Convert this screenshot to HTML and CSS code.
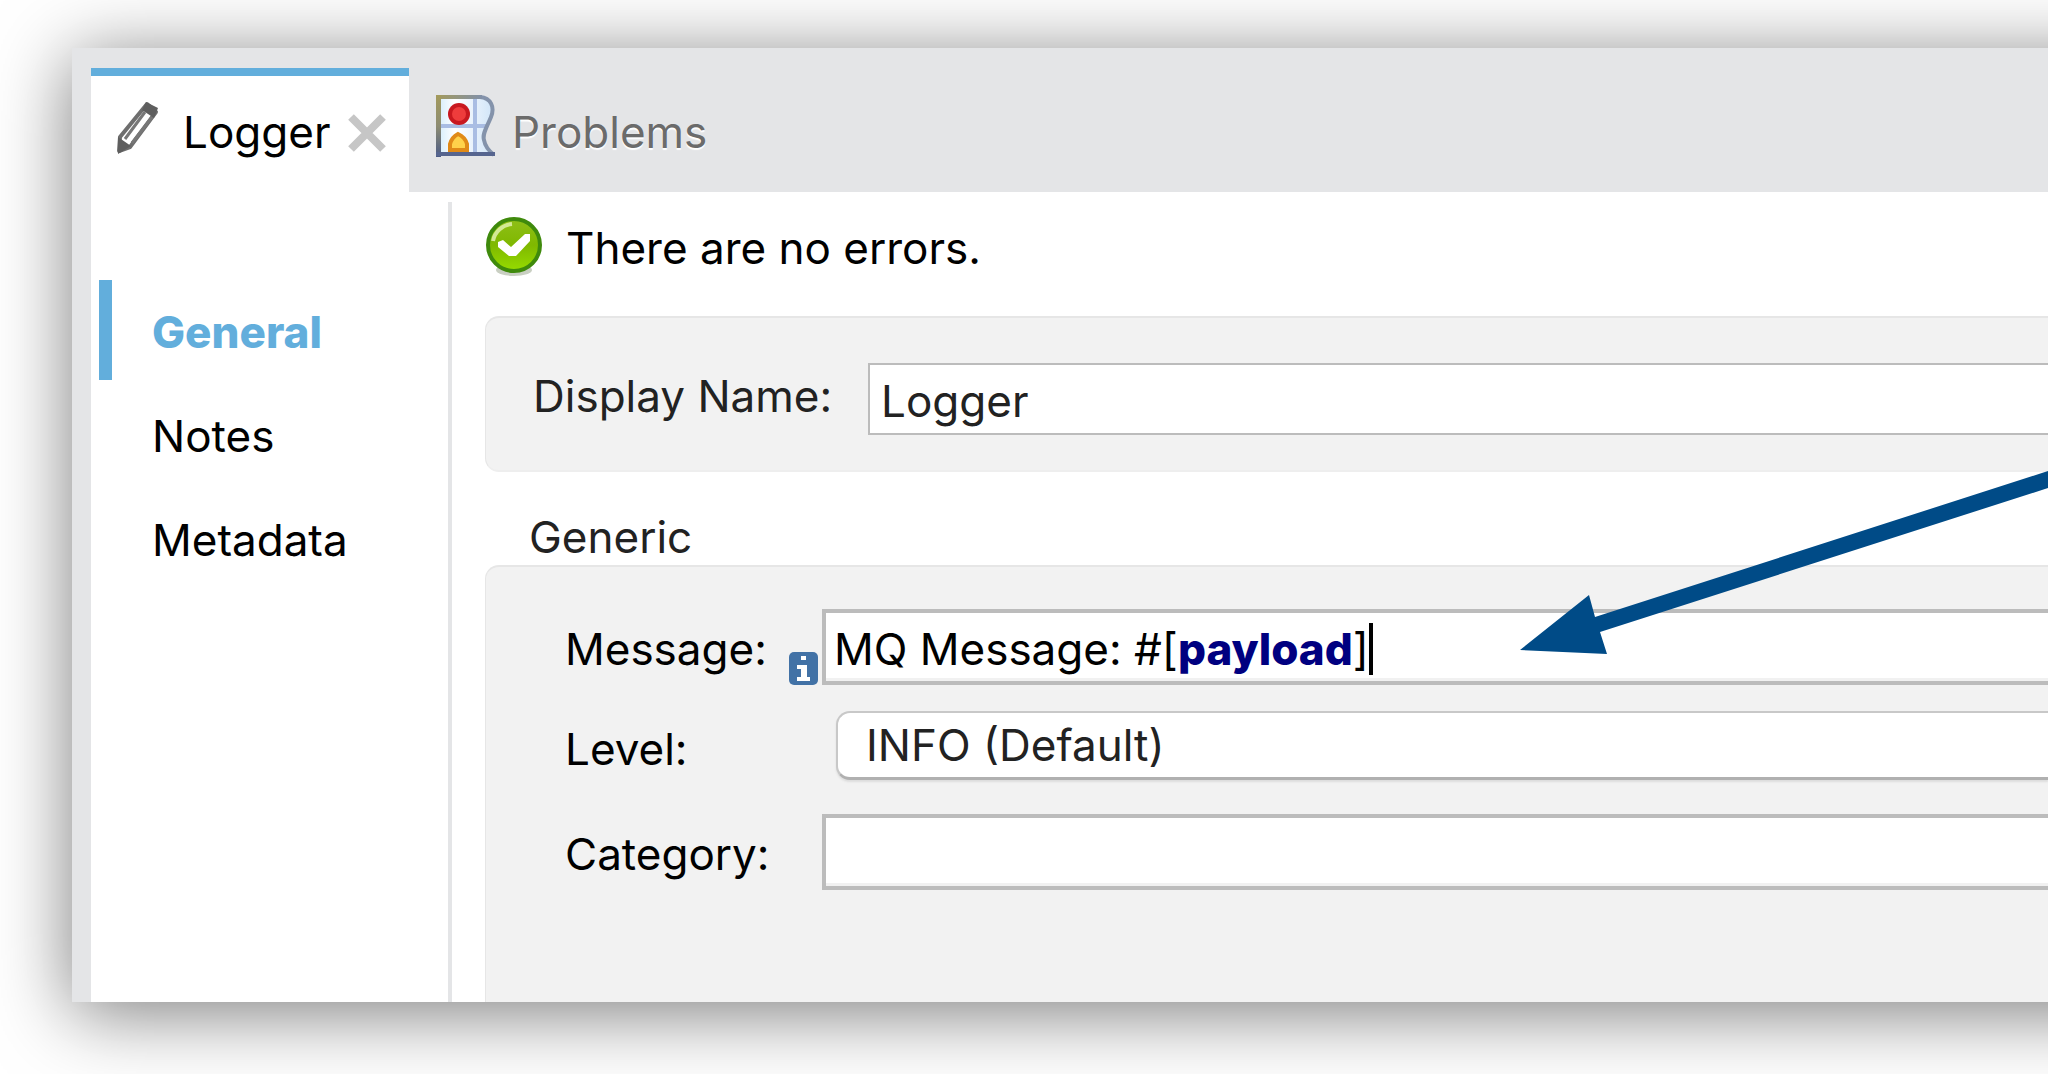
FILE: index.html
```html
<!DOCTYPE html>
<html lang="en">
<head>
<meta charset="utf-8">
<title>Logger</title>
<link rel="stylesheet" href="styles.css">
</head>
<body>
<div class="window">
  <div class="tabs" role="tablist">
    <div class="tab tab-active" role="tab" aria-selected="true">
      <svg class="pencil" viewBox="0 0 46 58" aria-hidden="true">
        <path d="M32 5 L5 38 L4 52 L15 48 L41 13 Z" fill="#fff" stroke="#6e6e6e" stroke-width="4" stroke-linejoin="round"/>
        <path d="M30 13 L10 40 M37 18 L17 44" stroke="#777" stroke-width="3"/>
        <path d="M31 3 L43 9 L39 19 L27 11 Z M3 38 L16 47 L3 55 Z" fill="#5e5e5e"/>
      </svg>
      <span class="tab-name">Logger</span>
      <button class="close" type="button" aria-label="Close">
        <svg class="close-icon" viewBox="0 0 40 40" aria-hidden="true"><path d="M4 4 L36 36 M36 4 L4 36" stroke="#c6c6c6" stroke-width="8"/></svg>
      </button>
    </div>
    <div class="tab tab-idle" role="tab" aria-selected="false">
      <svg class="problems-icon" viewBox="0 0 60 62" aria-hidden="true">
        <defs>
          <linearGradient id="edge" x1="0" y1="0" x2="0" y2="1"><stop offset="0" stop-color="#a39a5c"/><stop offset=".5" stop-color="#8d8c72"/><stop offset="1" stop-color="#4b5b86"/></linearGradient>
          <linearGradient id="top" gradientUnits="userSpaceOnUse" x1="0" y1="2" x2="46" y2="2"><stop offset="0" stop-color="#a39a5c"/><stop offset="1" stop-color="#8190a8"/></linearGradient>
          <linearGradient id="sheet" x1="0" y1="0" x2="1" y2="0"><stop offset="0" stop-color="#d5edfb"/><stop offset=".3" stop-color="#fff"/><stop offset="1" stop-color="#cfe4f8"/></linearGradient>
        </defs>
        <path d="M2 2 H44 C55 3 59 12 55 22 C51 32 46 39 48 45 C49 51 53 56 58 60 H2 Z" fill="url(#sheet)"/>
        <path d="M5 31 H51 M39 4 V58" stroke="#a9bde3" stroke-width="4"/>
        <path d="M44 2 C55 3 59 12 55 22 C51 32 46 39 48 45 C49 51 53 56 58 60" fill="none" stroke="#8493ab" stroke-width="4"/>
        <path d="M0 2 H46" stroke="url(#top)" stroke-width="4"/>
        <rect x="0" y="0" width="5" height="62" fill="url(#edge)"/>
        <path d="M0 59 H59" stroke="#56658f" stroke-width="4"/>
        <circle cx="23" cy="19" r="11" fill="#c8181f"/><circle cx="23" cy="19" r="7" fill="#ee3c3c"/>
        <path d="M14 55 V49 Q16 42 22 39 Q29 42 31 49 V55 Z" fill="#ffd24a" stroke="#e08a17" stroke-width="4"/>
      </svg>
      <span class="tab-name">Problems</span>
    </div>
  </div>
  <div class="content">
    <nav class="sidebar">
      <a class="nav-item nav-current" href="#general" aria-current="page">General</a>
      <a class="nav-item" href="#notes">Notes</a>
      <a class="nav-item" href="#metadata">Metadata</a>
    </nav>
    <main class="main">
      <div class="status">
        <svg class="status-icon" viewBox="0 0 58 60" aria-hidden="true">
          <defs><linearGradient id="ball" x1="0" y1="0" x2="0" y2="1"><stop offset="0" stop-color="#8fbf18"/><stop offset=".5" stop-color="#7fb800"/><stop offset="1" stop-color="#96dc00"/></linearGradient></defs>
          <ellipse cx="29" cy="54" rx="18" ry="6" fill="#c9cfc2"/>
          <circle cx="29" cy="29" r="26" fill="url(#ball)" stroke="#3f8a0c" stroke-width="4"/>
          <path d="M8 25 A21 21 0 0 1 27 8" fill="none" stroke="#d3e996" stroke-width="4"/>
          <path d="M13 26 L18 24 L26 31 L40 18 L45 18 L45 25 L31 40 L24 40 L13 31 Z" fill="#fff"/>
        </svg>
        <span class="status-text">There are no errors.</span>
      </div>
      <section class="panel name-panel">
        <label class="label" for="display-name">Display Name:</label>
        <input class="field name-field" id="display-name" type="text" value="Logger">
      </section>
      <h2 class="group-title">Generic</h2>
      <section class="panel form">
        <div class="row">
          <label class="label" id="message-label">Message:</label>
          <button class="info" type="button" aria-label="Message help">
            <svg class="info-icon" viewBox="0 0 29 33" aria-hidden="true"><rect width="29" height="33" rx="5" fill="#4272a6"/><path d="M12 4 H17 V8 H12 Z M8 13 H18 V25 H21 V29 H8 V25 H12 V17 H8 Z" fill="#fff"/></svg>
          </button>
          <div class="field message" role="textbox" contenteditable="true" aria-labelledby="message-label" spellcheck="false">MQ Message: #[<b class="keyword">payload</b>]<span class="caret"></span></div>
        </div>
        <div class="row level-row">
          <label class="label" for="level">Level:</label>
          <select class="select" id="level"><option>INFO (Default)</option></select>
        </div>
        <div class="row">
          <label class="label" for="category">Category:</label>
          <input class="field" id="category" type="text">
        </div>
      </section>
    </main>
  </div>
</div>
<svg class="arrow" viewBox="0 0 532 184" aria-hidden="true">
  <path d="M4 179 L73 124 L79 146 L532 0 V17 L84 161 L91 183 Z" fill="#004b87"/>
</svg>
</body>
</html>
```
FILE: styles.css
```css
* { box-sizing: border-box; }

body {
  margin: 0;
  min-height: 100vh;
  padding: 48px 0 72px 72px;
  display: flex;
  position: relative;
  overflow: hidden;
  background: #fff;
  color: #000;
  font: 44px/52px Inter, "Liberation Sans", sans-serif;
}

/* The window runs on past the right edge of the view */
.window {
  flex: 1;
  margin-right: -100px;
  padding: 20px 100px 0 19px;
  display: flex;
  flex-direction: column;
  background: #e4e5e7;
  box-shadow: 0 10px 72px rgba(0, 0, 0, .52);
}

.tabs { display: flex; }

.tab {
  height: 124px;
  display: flex;
  align-items: center;
  border-top: 8px solid transparent;
  padding-bottom: 4px;
}

.tab-active {
  width: 318px;
  padding-left: 24px;
  background: #fff;
  border-top-color: #62aedc;
}

.tab-idle {
  padding-left: 27px;
  gap: 16px;
  color: #6b6b6b;
  text-shadow: 0 2px 1px #fff;
}

.pencil { width: 46px; height: 58px; margin: 0 22px 8px 0; }
.problems-icon { width: 60px; height: 62px; margin-bottom: 12px; }

.close {
  margin-left: auto;
  margin-right: 22px;
  padding: 2px 0 0;
  border: 0;
  background: none;
  display: flex;
}

.close-icon { width: 40px; height: 40px; }

.content {
  flex: 1;
  margin-right: -100px;
  padding-right: 100px;
  display: flex;
  background: #fff;
}

.sidebar {
  width: 361px;
  margin-top: 10px;
  padding: 78px 0 0 8px;
  display: flex;
  flex-direction: column;
  gap: 4px;
  border-right: 4px solid #e4e5e7;
}

.nav-item {
  height: 100px;
  padding: 4px 0 0 40px;
  display: flex;
  align-items: center;
  border-left: 13px solid transparent;
  color: #000;
  text-decoration: none;
}

.nav-current {
  border-left-color: #62aedc;
  color: #62aedc;
  font-weight: 800;
}

.main {
  flex: 1;
  min-width: 0;
  padding: 24px 0 0 33px;
  display: flex;
  flex-direction: column;
}

.status { display: flex; gap: 23px; }
.status-icon { width: 58px; height: 60px; }
.status-text { padding-top: 6px; }

.panel {
  background: #f2f2f2;
  border: solid #e6e6e6;
  border-width: 2px 0 0 1px;
}

.name-panel {
  margin-top: 40px;
  height: 156px;
  padding: 0 0 0 47px;
  display: flex;
  align-items: center;
  border-bottom: 2px solid #eee;
  border-radius: 14px 0 0 14px;
  color: #222;
}

.name-panel .label { width: 335px; }

.group-title {
  margin: 39px 0 0;
  padding: 0 0 2px 44px;
  font-size: 44px;
  font-weight: 400;
  color: #222;
}

.form {
  flex: 1;
  padding: 42px 0 112px 79px;
  display: flex;
  flex-direction: column;
  gap: 34px;
  border-radius: 14px 0 0 0;
}

.row { display: flex; align-items: center; }
.label { width: 257px; padding-top: 4px; }

.field {
  flex: 1;
  min-width: 0;
  height: 76px;
  padding: 0 0 0 8px;
  border: solid #bcbcbc;
  border-width: 4px 0 4px 4px;
  border-radius: 0;
  background: #fff;
  box-shadow: inset 0 -3px 0 #f1f1f1;
  color: inherit;
  font: inherit;
  outline: 0;
}

.name-field {
  height: 72px;
  margin-top: 9px;
  padding: 4px 0 0 11px;
  border-width: 2px 0 2px 2px;
  box-shadow: none;
}

.info {
  align-self: flex-end;
  margin-left: -33px;
  margin-right: 4px;
  padding: 0;
  border: 0;
  background: none;
  display: flex;
}

.info-icon { width: 29px; height: 33px; }

.message {
  display: flex;
  align-items: center;
  padding-top: 4px;
  white-space: pre;
}

.keyword { color: #000080; font-weight: 800; }
.caret { width: 4px; height: 52px; background: #000; }

.level-row { margin: -8px 0 0; }
.level-row .label { padding-top: 7px; }

.select {
  flex: 1;
  min-width: 0;
  height: 69px;
  margin-left: 14px;
  padding: 0 0 0 28px;
  appearance: none;
  border: solid #c8c8c8;
  border-width: 2px 0 3px 2px;
  border-bottom-color: #b0b0b0;
  border-radius: 14px 0 0 14px;
  background: #fff;
  box-shadow: 0 2px 2px #ddd;
  color: #222;
  font: inherit;
}

/* Callout arrow lying over the form */
.arrow {
  position: absolute;
  right: 0;
  top: 471px;
  width: 532px;
  height: 184px;
  pointer-events: none;
}
```
